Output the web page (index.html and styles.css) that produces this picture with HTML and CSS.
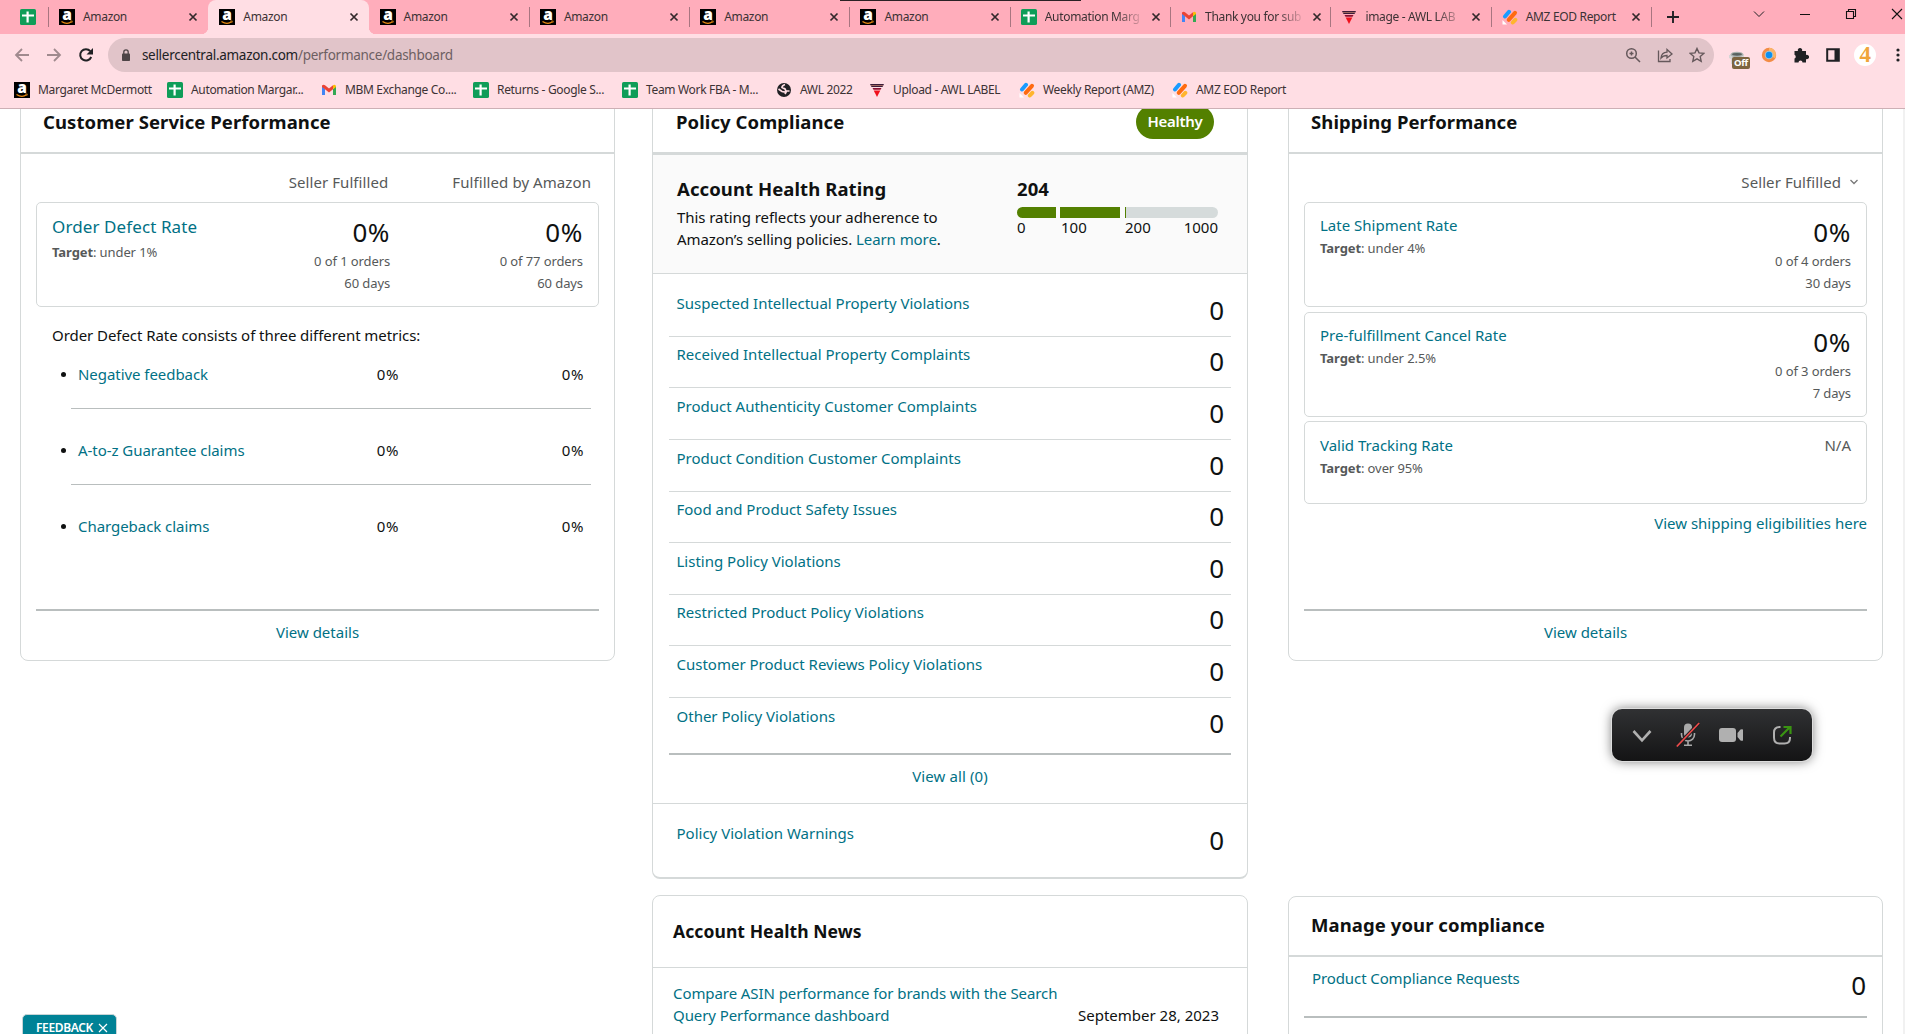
FILE: index.html
```html
<!DOCTYPE html>
<html lang="en">
<head>
<meta charset="utf-8">
<title>Account Health</title>
<link rel="stylesheet" href="styles.css">
</head>
<body>
<svg class="defs" width="0" height="0">
  <symbol id="amz" viewBox="0 0 16 16"><rect width="16" height="16" fill="#000"/><text x="8" y="10.800" text-anchor="middle" font-family="Open Sans, sans-serif" font-weight="800" font-size="15.500" letter-spacing="0" fill="#fff">a</text><path d="M2.500 12.500q5.500 3.500 10 .3" fill="none" stroke="#e88a10" stroke-width="1.300"/><path d="M11.300 12h2l-.5 1.800" fill="none" stroke="#e88a10" stroke-width=".8"/></symbol>
  <symbol id="sheet" viewBox="0 0 16 16"><rect width="16" height="16" rx="1.600" fill="#0f9d58"/><path d="M6.500 2.500h2.200V5.500H14v2H8.700V13.500H6.500V7.500H2v-2h4.500z" fill="#fff"/></symbol>
  <symbol id="gmail" viewBox="0 0 16 16"><path d="M1 4v9h3V7z" fill="#4285f4"/><path d="M15 4v9h-3V7z" fill="#34a853"/><path d="M1 3.500Q2.500 2 4 3.200l4 3.200 4-3.200v4L8 10.500 4 7.300 1 5z" fill="#ea4335"/><path d="M12 3.200Q14 2 15 4v1l-3 2.300z" fill="#fbbc04"/></symbol>
  <symbol id="globe" viewBox="0 0 16 16"><circle cx="8" cy="8" r="7" fill="#202124"/><path d="M9 2.500q-3 1-3 3l3 1.500 1 2-1 1-3-.5L2.500 7M13.500 9l-3 0-1.500 3" fill="none" stroke="#ffdee4" stroke-width="1.700"/></symbol>
  <symbol id="awl" viewBox="0 0 16 16"><path d="M1 2h14l-1.500 3h-11z" fill="#3b1c3a"/><path d="M2 3.500h12" stroke="#c98a70" stroke-width=".7"/><path d="M3.500 6h9l-1 1.700h-7z" fill="#8b1030"/><path d="M4.700 8.500h6.600L8 15z" fill="#f0101c"/></symbol>
  <symbol id="stripes" viewBox="0 0 16 16"><g stroke-width="4" stroke-linecap="round"><path d="M3 7.500 7 2.800" stroke="#1a9cff"/><path d="M6.700 10.800 13 3.800" stroke="#ff6a10"/><path d="M10.800 13.500 13.300 10.800" stroke="#ffb52e"/></g><path d="M.5 11v4.500H5z" fill="#fff"/></symbol>
  <symbol id="x" viewBox="0 0 16 16"><path d="M4.500 4.500l7 7M11.500 4.500l-7 7" stroke="#33292b" stroke-width="1.700"/></symbol>
</svg>

<header class="browser">
  <div class="notch"></div>
  <div class="tabs">
    <div class="pinned"><svg class="fav"><use href="#sheet"/></svg></div>
    <div class="tab sep"><svg class="fav"><use href="#amz"/></svg><span>Amazon</span><svg class="close"><use href="#x"/></svg></div>
    <div class="tab active"><svg class="fav"><use href="#amz"/></svg><span>Amazon</span><svg class="close"><use href="#x"/></svg></div>
    <div class="tab"><svg class="fav"><use href="#amz"/></svg><span>Amazon</span><svg class="close"><use href="#x"/></svg></div>
    <div class="tab sep"><svg class="fav"><use href="#amz"/></svg><span>Amazon</span><svg class="close"><use href="#x"/></svg></div>
    <div class="tab sep"><svg class="fav"><use href="#amz"/></svg><span>Amazon</span><svg class="close"><use href="#x"/></svg></div>
    <div class="tab sep"><svg class="fav"><use href="#amz"/></svg><span>Amazon</span><svg class="close"><use href="#x"/></svg></div>
    <div class="tab sep"><svg class="fav"><use href="#sheet"/></svg><span class="fade">Automation Marg</span><svg class="close"><use href="#x"/></svg></div>
    <div class="tab sep"><svg class="fav"><use href="#gmail"/></svg><span class="fade">Thank you for sub</span><svg class="close"><use href="#x"/></svg></div>
    <div class="tab sep"><svg class="fav"><use href="#awl"/></svg><span class="fade">image - AWL LAB</span><svg class="close"><use href="#x"/></svg></div>
    <div class="tab sep"><svg class="fav"><use href="#stripes"/></svg><span>AMZ EOD Report</span><svg class="close"><use href="#x"/></svg></div>
    <div class="newtab sep"><svg width="16" height="16" viewBox="0 0 16 16"><path d="M8 2v12M2 8h12" stroke="#202124" stroke-width="1.900"/></svg></div>
    <div class="winbtns">
      <svg viewBox="0 0 16 16"><path d="M3 5.500l5 5 5-5" fill="none" stroke="#202124"/></svg>
      <svg viewBox="0 0 16 16"><path d="M3 8.500h10" stroke="#111" stroke-width="1"/></svg>
      <svg viewBox="0 0 16 16"><path d="M3.500 5.500h7v7h-7zM5.500 5.500v-2h7v7h-2" fill="none" stroke="#111" stroke-width="1.100"/></svg>
      <svg viewBox="0 0 16 16"><path d="M3 3l10 10M13 3L3 13" stroke="#111" stroke-width="1.100"/></svg>
    </div>
  </div>
  <div class="toolbar">
    <div class="nav">
      <svg viewBox="0 0 16 16"><path d="M15 8H2M8 2L2 8l6 6" fill="none" stroke="#a08a8e" stroke-width="1.800"/></svg>
      <svg viewBox="0 0 16 16"><path d="M1 8h13M8 2l6 6-6 6" fill="none" stroke="#a08a8e" stroke-width="1.800"/></svg>
      <svg viewBox="0 0 16 16"><path d="M13.200 10A5.700 5.700 0 1 1 12.300 4.200" fill="none" stroke="#202124" stroke-width="2"/><path d="M15 1v6.500H8.500z" fill="#202124"/></svg>
    </div>
    <div class="omnibox">
      <svg class="lock" viewBox="0 0 10 12"><rect x="1" y="4.500" width="8" height="7.500" rx=".8" fill="#4d4446"/><path d="M2.800 5V3a2.200 2.200 0 0 1 4.400 0v2" fill="none" stroke="#4d4446" stroke-width="1.300"/></svg>
      <span class="url">sellercentral.amazon.com<i>/performance/dashboard</i></span>
      <div class="oicons">
        <svg viewBox="0 0 16 16" fill="none" stroke="#65585b" stroke-width="1.500"><circle cx="6.500" cy="6.500" r="4.800"/><path d="M10 10l5 5M4.500 6.500h4M6.500 4.500v4"/></svg>
        <svg viewBox="0 0 16 16" fill="none" stroke="#65585b" stroke-width="1.300"><path d="M1.500 3.500v11h11.500V12"/><path d="M4 11q.5-5.500 6-5.800V2.500L15 7l-5 4V8.500Q6 8.500 4 11z"/></svg>
        <svg viewBox="0 0 16 16" fill="none" stroke="#65585b" stroke-width="1.400"><path d="M8 1.500l2 4.400 4.800.5-3.600 3.200 1 4.700L8 11.900l-4.200 2.400 1-4.700L1.200 6.400 6 5.900z"/></svg>
      </div>
    </div>
    <div class="exts">
      <div class="camel"><svg viewBox="0 0 18 14"><path d="M1 4h15v9H3V8L1 7z" fill="#d5d5d5"/><ellipse cx="9" cy="3.500" rx="6.500" ry="2.800" fill="#a9b0ae"/><ellipse cx="9" cy="3.300" rx="5" ry="1.400" fill="#596260"/></svg><b>Off</b></div>
      <svg viewBox="0 0 16 16"><circle cx="8" cy="8" r="7.200" fill="#f28c45"/><path d="M8 .8a7 7 0 0 1 6 10.500L8 8z" fill="#fbb468"/><circle cx="8" cy="8" r="4.300" fill="#a9c4cc"/><circle cx="8" cy="8" r="3.200" fill="#0b8ff0"/></svg>
      <svg viewBox="0 0 16 16"><path d="M1.500 4H5a2.200 2.200 0 1 1 4 0h4v4a2.200 2.200 0 1 1 0 4v3.500H9.500a2 2 0 0 0-4 0h-4v-4a2 2 0 0 0 0-3.700z" fill="#202124"/></svg>
      <svg viewBox="0 0 16 16"><path d="M2.200 2.200h11.600v11.600H2.200z" fill="none" stroke="#202124" stroke-width="2"/><path d="M9.500 2h4.500v12H9.500z" fill="#202124"/></svg>
      <span class="avatar">4</span>
      <svg viewBox="0 0 16 16" fill="#202124"><circle cx="9" cy="3" r="1.600"/><circle cx="9" cy="8" r="1.600"/><circle cx="9" cy="13" r="1.600"/></svg>
    </div>
  </div>
  <nav class="bookmarks">
    <a><svg class="fav"><use href="#amz"/></svg><span>Margaret McDermott</span></a>
    <a><svg class="fav"><use href="#sheet"/></svg><span>Automation Margar...</span></a>
    <a><svg class="fav"><use href="#gmail"/></svg><span>MBM Exchange Co....</span></a>
    <a><svg class="fav"><use href="#sheet"/></svg><span>Returns - Google S...</span></a>
    <a><svg class="fav"><use href="#sheet"/></svg><span>Team Work FBA - M...</span></a>
    <a><svg class="fav"><use href="#globe"/></svg><span>AWL 2022</span></a>
    <a><svg class="fav"><use href="#awl"/></svg><span>Upload - AWL LABEL</span></a>
    <a><svg class="fav"><use href="#stripes"/></svg><span>Weekly Report (AMZ)</span></a>
    <a><svg class="fav"><use href="#stripes"/></svg><span>AMZ EOD Report</span></a>
  </nav>
</header>

<main class="page">
  <section class="col">
    <article class="card top perf">
      <div class="head"><h2>Customer Service Performance</h2></div>
      <div class="colheads"><span>Seller Fulfilled</span><span>Fulfilled by Amazon</span></div>
      <div class="box">
        <div class="what"><a class="big">Order Defect Rate</a><small><b>Target</b>: under 1%</small></div>
        <div class="val"><strong>0%</strong><small>0 of 1 orders</small><small>60 days</small></div>
        <div class="val"><strong>0%</strong><small>0 of 77 orders</small><small>60 days</small></div>
      </div>
      <p class="consists">Order Defect Rate consists of three different metrics:</p>
      <ul class="metrics">
        <li><a>Negative feedback</a><span>0%</span><span>0%</span></li>
        <li><a>A-to-z Guarantee claims</a><span>0%</span><span>0%</span></li>
        <li><a>Chargeback claims</a><span>0%</span><span>0%</span></li>
      </ul>
      <div class="foot"><a>View details</a></div>
    </article>
  </section>

  <section class="col mid">
    <article class="card top policy">
      <div class="head thick"><h2>Policy Compliance</h2><span class="pill">Healthy</span></div>
      <div class="rating">
        <div class="about"><h3>Account Health Rating</h3><p>This rating reflects your adherence to<br>Amazon’s selling policies. <a>Learn more</a>.</p></div>
        <div class="score"><h3>204</h3>
          <div class="bar"><i></i><i></i><i></i></div>
          <div class="ticks"><span>0</span><span>100</span><span>200</span><span>1000</span></div>
        </div>
      </div>
      <div class="rows">
        <div class="row"><a>Suspected Intellectual Property Violations</a><strong>0</strong></div>
        <div class="row"><a>Received Intellectual Property Complaints</a><strong>0</strong></div>
        <div class="row"><a>Product Authenticity Customer Complaints</a><strong>0</strong></div>
        <div class="row"><a>Product Condition Customer Complaints</a><strong>0</strong></div>
        <div class="row"><a>Food and Product Safety Issues</a><strong>0</strong></div>
        <div class="row"><a>Listing Policy Violations</a><strong>0</strong></div>
        <div class="row"><a>Restricted Product Policy Violations</a><strong>0</strong></div>
        <div class="row"><a>Customer Product Reviews Policy Violations</a><strong>0</strong></div>
        <div class="row last"><a>Other Policy Violations</a><strong>0</strong></div>
      </div>
      <div class="viewall"><a>View all (0)</a></div>
      <div class="row warn"><a>Policy Violation Warnings</a><strong>0</strong></div>
    </article>
    <article class="card news">
      <div class="newshead"><h3>Account Health News</h3></div>
      <div class="item"><a>Compare ASIN performance for brands with the Search<br>Query Performance dashboard</a><time>September 28, 2023</time></div>
    </article>
  </section>

  <section class="col">
    <article class="card top perf">
      <div class="head"><h2>Shipping Performance</h2></div>
      <div class="colheads pick"><span>Seller Fulfilled</span><svg width="10" height="10" viewBox="0 0 10 10"><path d="M1.500 3l3.500 3.500L8.500 3" fill="none" stroke="#777" stroke-width="1.300"/></svg></div>
      <div class="box">
        <div class="what"><a>Late Shipment Rate</a><small><b>Target</b>: under 4%</small></div>
        <div class="val"><strong>0%</strong><small>0 of 4 orders</small><small>30 days</small></div>
      </div>
      <div class="box">
        <div class="what"><a>Pre-fulfillment Cancel Rate</a><small><b>Target</b>: under 2.5%</small></div>
        <div class="val"><strong>0%</strong><small>0 of 3 orders</small><small>7 days</small></div>
      </div>
      <div class="box short">
        <div class="what"><a>Valid Tracking Rate</a><small><b>Target</b>: over 95%</small></div>
        <div class="na">N/A</div>
      </div>
      <div class="elig"><a>View shipping eligibilities here</a></div>
      <div class="foot"><a>View details</a></div>
    </article>
    <article class="card manage">
      <div class="managehead"><h2>Manage your compliance</h2></div>
      <div class="row req"><a>Product Compliance Requests</a><strong>0</strong></div>
      <div class="viewall"><a>View all (0)</a></div>
    </article>
  </section>
  <div class="scroll"></div>
</main>

<div class="feedback"><span>FEEDBACK</span><svg width="10" height="10" viewBox="0 0 10 10"><path d="M1 1l8 8M9 1L1 9" stroke="#fff" stroke-width="1.200"/></svg></div>

<div class="meeting">
  <svg viewBox="0 0 24 26"><path d="M3.500 9l8.500 9.300L20.500 9" fill="none" stroke="#b0b0b0" stroke-width="2.600"/></svg>
  <svg class="mic" viewBox="0 0 24 26"><rect x="8" y="1.500" width="8" height="14" rx="4" fill="#a9a9a9"/><path d="M5.500 11v1.500a6.500 6.500 0 0 0 13 0V11M12 19v3.500M8 23.300h8" fill="none" stroke="#a9a9a9" stroke-width="1.600"/><path d="M.800 24.500L23.200 1" stroke="#1f1f20" stroke-width="3.600"/><path d="M.800 24.500L23.200 1" stroke="#ef4b4b" stroke-width="1.700"/></svg>
  <svg class="cam" viewBox="0 0 24 26"><rect x="0" y="6" width="17" height="14" rx="3" fill="#b0b0b0"/><path d="M18.500 11l3-3.500q1.500-.7 2.500 0v11q-1 .7-2.500 0l-3-3.500z" fill="#b0b0b0"/></svg>
  <svg class="share" viewBox="0 0 24 26"><path d="M10.500 5H9.500Q4 5 4 10.500v5Q4 21.500 9.500 21.500h5Q20 21.500 20 16v-1" fill="none" stroke="#b0b0b0" stroke-width="2"/><path d="M10.500 14.500L19.500 5.500M13.500 5h7v7" fill="none" stroke="#3a9412" stroke-width="2.200"/></svg>
</div>
</body>
</html>
```
FILE: styles.css
```css
* { box-sizing: border-box; }
body { margin: 0; width: 1905px; height: 1034px; overflow: hidden; background: #fff; color: #0f1111; font: 15px/22px "Noto Sans", "Open Sans", sans-serif; letter-spacing: 0; }
h2, h3, p, ul { margin: 0; padding: 0; }
svg { display: block; flex: none; }
.defs { position: absolute; }
a { color: #017185; }
small { font-size: 13px; color: #565959; letter-spacing: -.1px; }

.browser { height: 109px; background: #ffdee4; border-bottom: 1px solid #cdb0b5; font-size: 12px; color: #3c3234; letter-spacing: -.33px; }
.notch { position: absolute; left: 840px; top: 0; width: 241px; height: 1px; background: #2b2024; }
.fav { width: 16px; height: 16px; }
.tabs { display: flex; height: 34px; background: #ffadbb; }
.pinned { width: 48px; padding: 9px 0 0 20px; }
.tab { display: flex; align-items: center; width: 160.300px; padding: 0 7px 0 11px; }
.tab span { flex: 1; margin-left: 8px; white-space: nowrap; }
.tab .fade { margin-right: 8px; -webkit-mask-image: linear-gradient(90deg, #000 75%, transparent 105%); mask-image: linear-gradient(90deg, #000 75%, transparent 105%); }
.close { width: 16px; height: 16px; }
.sep { background: linear-gradient(#a87580, #a87580) 0 7px / 1px 20px no-repeat; }
.active { position: relative; background: #ffdee4; border-radius: 8px 8px 0 0; }
.active::before, .active::after { content: ""; position: absolute; bottom: 0; width: 7px; height: 7px; }
.active::before { left: -7px; background: radial-gradient(circle at 0 0, transparent 7px, #ffdee4 7.500px); }
.active::after { right: -7px; background: radial-gradient(circle at 100% 0, transparent 7px, #ffdee4 7.500px); }
.newtab { padding: 9px 0 0 14px; width: 100px; }
.winbtns { display: flex; gap: 30px; padding-top: 6px; }
.winbtns svg { width: 16px; height: 16px; }
.toolbar { display: flex; align-items: center; height: 42px; padding-left: 14px; }
.nav { display: flex; gap: 16px; width: 94px; }
.nav svg, .oicons svg { width: 16px; height: 16px; }
.omnibox { display: flex; align-items: center; width: 1608px; height: 34px; border-radius: 17px; background: #e1c4c9; padding: 0 9px 0 13px; }
.lock { width: 10px; height: 12px; }
.url { margin-left: 11px; flex: 1; font-size: 13.500px; color: #202124; letter-spacing: -.28px; }
.url i { font-style: normal; color: #6d5f62; }
.oicons { display: flex; gap: 16px; }
.exts { display: flex; align-items: center; gap: 16px; margin-left: 15px; }
.exts > svg { width: 16px; height: 16px; }
.camel { display: flex; width: 16px; height: 20px; position: relative; }
.camel svg { width: 18px; height: 14px; margin: 6px 0 0 -1px; }
.camel b { position: absolute; left: 3px; top: 12px; width: 18px; height: 12px; border-radius: 2px; background: #7d6440; color: #fff; font-size: 9.500px; line-height: 12px; text-align: center; }
.avatar { width: 22px; height: 22px; margin: 0 -3px; border-radius: 50%; background: #fff; color: #f0a53a; text-align: center; font: 700 23px/22px "Liberation Serif", serif; }
.bookmarks { display: grid; grid-template-columns: 153px 154px 152px 149px 154px 93px 150px 153px 160px; height: 32px; padding: 0 0 4px 14px; align-items: center; }
.bookmarks a { display: flex; gap: 8px; align-items: center; color: #3c3234; white-space: nowrap; }

.page { display: flex; height: 925px; overflow: hidden; padding-left: 20px; }
.col { width: 595px; margin-right: 37px; flex: none; }
.mid { width: 596px; margin-right: 40px; }
.col:nth-child(3) { margin-right: 20px; }
.scroll { width: 2px; background: #f1f1f1; }
.card { border: 1px solid #d5d9d9; border-radius: 8px; }
.top { margin-top: -20px; }
.perf { height: 572px; padding-bottom: 17px; display: flex; flex-direction: column; }
.head { display: flex; justify-content: space-between; height: 64px; padding: 18px 33px 0 22px; border-bottom: 2px solid #d5d9d9; flex: none; }
.thick { height: 65px; border-bottom-width: 3px; padding-left: 23px; }
h2, h3 { font-size: 18.500px; line-height: 28px; font-weight: 700; letter-spacing: .08px; }
.pill { height: 34px; margin-top: -3px; padding: 0 11.500px; border-radius: 17px; background: #538000; color: #fff; font-size: 15px; line-height: 33px; font-weight: 600; letter-spacing: -.3px; }
.colheads { display: flex; justify-content: flex-end; gap: 64px; height: 48px; padding: 17px 23px 0 0; color: #565959; flex: none; letter-spacing: .08px; }
.pick { gap: 8px; }
.pick svg { margin-top: 6px; }
.box { display: flex; justify-content: space-between; height: 105px; margin: 0 15px 5px; padding: 11px 15px; border: 1px solid #d5d9d9; border-radius: 5px; flex: none; }
.short { height: 83px; margin-top: -1px; padding-top: 12px; }
.what { display: flex; flex-direction: column; flex: 1; white-space: nowrap; }
.what small { line-height: 22px; margin-top: 1px; }
.big { font-size: 17px; line-height: 26px; letter-spacing: .1px; }
.val { display: flex; flex-direction: column; width: 194px; text-align: right; }
.val strong { font-weight: 400; font-size: 26px; line-height: 36px; letter-spacing: .6px; }
.val small { line-height: 22px; }
.na { color: #565959; }
.consists { margin: 12px 0 0 31px; letter-spacing: -.06px; }
.metrics { list-style: none; margin: 17px 23px 0 40px; letter-spacing: -.05px; }
.metrics li { display: flex; height: 76px; background: linear-gradient(#b9bebe, #b9bebe) 10px 45px / 520px 1px no-repeat; }
.metrics li::before { content: ""; width: 5px; height: 5px; margin: 9px 12px 0 0; border-radius: 50%; background: #0f1111; }
.metrics li:last-child { background: none; }
.metrics a { width: 190px; margin-right: auto; white-space: nowrap; }
.metrics span { width: 100px; text-align: right; letter-spacing: .6px; }
.metrics span:last-child { width: 185px; margin-right: 7px; }
.elig { text-align: right; margin: 3px 15px 0; }
.foot { margin: auto 15px 0; border-top: 2px solid #b9bebe; padding-top: 10px; text-align: center; }

.rating { display: flex; height: 119px; background: #fafafa; border-bottom: 1px solid #d5d9d9; padding: 20px 0 0 24px; }
.rating p { margin-top: 3px; letter-spacing: -.07px; }
.about { width: 340px; }
.score { width: 201px; }
.bar { display: flex; height: 11px; margin-top: 4px; border-radius: 6px; overflow: hidden; }
.bar i { background: #538000; width: 39px; margin-right: 4px; }
.bar i:nth-child(2) { width: 60px; margin-right: 5px; }
.bar i:nth-child(3) { flex: 1; margin: 0; background: linear-gradient(90deg, #538000 1px, #d5dbdb 1px); }
.ticks { display: grid; grid-template-columns: 44px 64px 1fr auto; line-height: 18px; }
.row { display: flex; justify-content: space-between; padding: 6.600px 7px 0 7.500px; height: 51.600px; border-bottom: 1px solid #d5d9d9; }
.row strong { font-weight: 400; font-size: 26px; line-height: 36px; }
.rows { margin: 0 16px; padding-top: 11.300px; }
.last { height: 57.200px; border-bottom: 2px solid #b9bebe; }
.viewall { height: 48px; padding-top: 10px; text-align: center; letter-spacing: .1px; }
.policy { border-bottom-width: 2px; }
.warn { height: 74px; border-top: 1px solid #d5d9d9; border-bottom: 0; padding: 18px 23px 0 23.500px; }
.news { margin-top: 16px; height: 200px; }
.newshead { height: 72px; padding: 21px 20px; border-bottom: 1px solid #d5d9d9; }
.newshead h3 { font-size: 17.500px; }
.item { display: flex; justify-content: space-between; align-items: flex-end; padding: 14px 28px 0 20px; }
.item a { letter-spacing: -.08px; }
.manage { margin-top: 235px; height: 200px; }
.managehead { height: 60px; padding: 14px 22px; border-bottom: 2px solid #d5d9d9; }
.req { margin: 0 15px; padding: 10px 1px 0 8px; height: 61px; border-bottom: 2px solid #b9bebe; letter-spacing: -.1px; }

.feedback { position: absolute; left: 22px; top: 1014px; width: 95px; height: 30px; display: flex; align-items: center; gap: 5px; padding-left: 13px; border: 1px solid #c8d4d6; border-radius: 5px; background: #008296; color: #fff; font-size: 12px; font-weight: 600; line-height: 26px; letter-spacing: -.35px; padding-bottom: 2px; }
.meeting { position: absolute; left: 1612px; top: 709px; width: 200px; height: 52px; display: flex; align-items: center; padding-left: 18px; border-radius: 10px; background: linear-gradient(#303133, #141415); box-shadow: 0 0 0 1px #ddd, 0 0 12px rgba(0,0,0,.55); }
.meeting svg { width: 24px; height: 26px; }
.meeting .mic { margin-left: 22px; }
.meeting .cam { margin-left: 19px; }
.meeting .share { margin-left: 27px; }
```
